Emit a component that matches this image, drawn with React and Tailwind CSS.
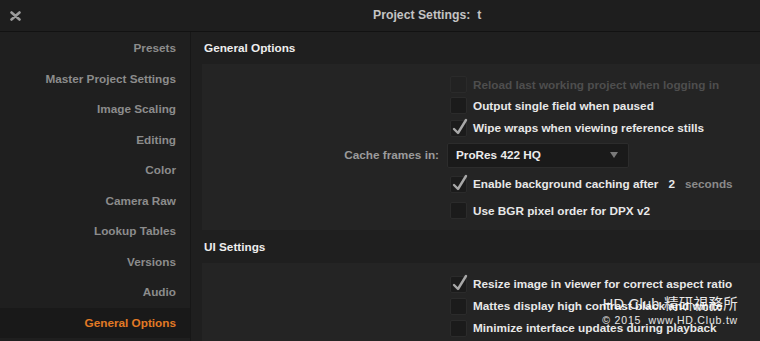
import React from 'react';

const navItems = [
  'Presets',
  'Master Project Settings',
  'Image Scaling',
  'Editing',
  'Color',
  'Camera Raw',
  'Lookup Tables',
  'Versions',
  'Audio',
  'General Options',
];

const Check = ({ checked, disabled }) => (
  <div
    className={`relative w-[17px] h-[17px] shrink-0 rounded-[2px] border ${
      disabled ? 'bg-[#222] border-[#2a2a2a]' : 'bg-[#1b1b1b] border-[#2b2b2b]'
    }`}
  >
    {checked && (
      <svg className="absolute left-[1px] top-[-3px]" width="16" height="18" viewBox="0 0 16 18">
        <path d="M2 11 L6 15 L14 2" fill="none" stroke="#a8a8a8" strokeWidth="2.4" strokeLinecap="round" strokeLinejoin="round" />
      </svg>
    )}
  </div>
);

const Row = ({ h, checked, disabled, children }) => (
  <div className={`flex items-center ${h}`}>
    <div className="w-[248px]" />
    <Check checked={checked} disabled={disabled} />
    <span className={`ml-[6px] ${disabled ? 'text-[#4e4e4e]' : 'text-[#e8e8e8]'}`}>{children}</span>
  </div>
);

const App = () => {
  return (
    <div className="relative w-[760px] h-[341px] overflow-hidden bg-[#1f1f1f] flex flex-col text-[11.75px] font-bold font-['Liberation_Sans',Arial,sans-serif]">
      <header className="h-[32px] shrink-0 flex items-center border-b border-[#121212] bg-[#1e1e1e]">
        <svg className="ml-[10px]" width="11" height="10" viewBox="0 0 11 10">
          <path d="M1.5 1.5 L9.5 8.5 M9.5 1.5 L1.5 8.5" stroke="#9c9c9c" strokeWidth="2.6" strokeLinecap="round" />
        </svg>
        <h1 className="ml-[352px] text-[12.25px] text-[#c4c4c4]">Project Settings:&nbsp; t</h1>
      </header>

      <div className="flex flex-1 min-h-0">
        <aside className="w-[191px] shrink-0 border-r border-[#171717] pt-px">
          {navItems.map((item, i) => {
            const active = i === navItems.length - 1;
            return (
              <div
                key={item}
                className={`h-[30.5px] flex items-center justify-end pr-[14px] ${
                  active ? 'bg-[#191919] text-[#e27a25]' : 'text-[#8c8c8c]'
                }`}
              >
                {item}
              </div>
            );
          })}
        </aside>

        <main className="flex-1 flex flex-col">
          <div className="h-[32px] shrink-0 flex items-center pl-[13px] text-[#eeeeee]">General Options</div>
          <section className="ml-[11px] h-[166px] shrink-0 bg-[#242424] pt-[10px]">
            <Row h="h-[21px]" disabled>Reload last working project when logging in</Row>
            <Row h="h-[21px]">Output single field when paused</Row>
            <Row h="h-[24px]" checked>Wipe wraps when viewing reference stills</Row>
            <div className="flex items-center h-[30px]">
              <div className="w-[237px] text-right text-[#9b9b9b]">Cache frames in:</div>
              <div className="ml-[8px] w-[182px] h-[25px] flex items-center justify-between px-[8px] bg-[#1a1a1a] border border-[#2c2c2c] rounded-[2px]">
                <span className="text-[#ececec]">ProRes 422 HQ</span>
                <svg width="8" height="6" viewBox="0 0 8 6" className="mr-[2px]">
                  <path d="M0 0 L8 0 L4 6 Z" fill="#7a7a7a" />
                </svg>
              </div>
            </div>
            <Row h="h-[28px]" checked>
              Enable background caching after
              <span className="ml-[10px] text-[#e8e8e8]">2</span>
              <span className="ml-[10px] text-[#8a8a8a]">seconds</span>
            </Row>
            <Row h="h-[25px]">Use BGR pixel order for DPX v2</Row>
          </section>
          <div className="h-[33px] shrink-0 flex items-center pl-[13px] text-[#eeeeee]">UI Settings</div>
          <section className="ml-[11px] flex-1 bg-[#242424] pt-[10px]">
            <Row h="h-[22px]" checked>Resize image in viewer for correct aspect ratio</Row>
            <Row h="h-[22px]">Mattes display high contrast black and white</Row>
            <Row h="h-[22px]">Minimize interface updates during playback</Row>
          </section>
        </main>
      </div>

      <div className="absolute right-[22px] top-[297px] flex flex-col items-end whitespace-nowrap text-white/90 font-normal leading-none pointer-events-none font-['Liberation_Sans','Noto_Sans_CJK_TC',sans-serif]">
        <span className="text-[14.5px] tracking-[0.3px]">HD.Club 精研視務所</span>
        <span className="text-[10.5px] mt-[3px] tracking-[0.8px]">© 2015&nbsp; www.HD.Club.tw</span>
      </div>
    </div>
  );
};

export default App;
